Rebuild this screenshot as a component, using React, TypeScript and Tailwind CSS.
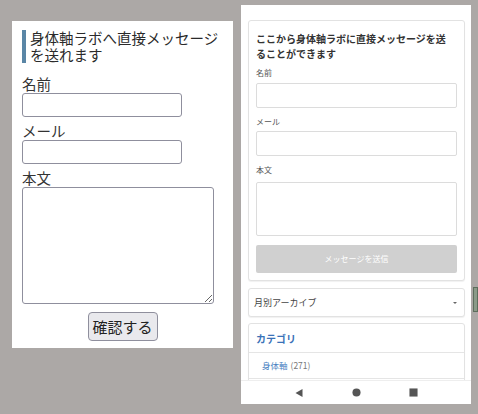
import React from "react";

const jp = { fontFamily: '"Noto Sans CJK JP", "Noto Sans", sans-serif' };

function OldForm() {
  return (
    <div className="mt-[21px] ml-[12px] w-[221px] h-[327px] bg-white pl-[10px] pr-[10px] pt-[9px] flex flex-col text-[#333]">
      <div className="border-l-[4px] border-[#5a86a6] pl-[4px] text-[14.5px] leading-[16.5px] h-[33px] text-[#2a2a2a]">
        身体軸ラボへ直接メッセージを送れます
      </div>
      <label className="mt-[12px] text-[14.5px] leading-[18px]">名前</label>
      <input className="w-[160px] h-[24px] border border-[#8f8f9d] rounded-[3px]" />
      <label className="mt-[5px] text-[14.5px] leading-[18px]">メール</label>
      <input className="w-[160px] h-[24px] border border-[#8f8f9d] rounded-[3px]" />
      <label className="mt-[5px] text-[14.5px] leading-[18px]">本文</label>
      <textarea className="w-[192px] h-[117px] border border-[#8f8f9d] rounded-[3px] resize" />
      <div className="flex justify-center mt-[8px]">
        <button className="w-[70px] h-[29px] bg-[#e9e9ed] border border-[#8f8f9d] rounded-[4px] text-[15px] leading-none text-[#222]">
          確認する
        </button>
      </div>
    </div>
  );
}

function Card({ children, className = "" }: { children: React.ReactNode; className?: string }) {
  return (
    <div className={"border border-[#e2e2e2] rounded-[3px] bg-white shadow-[0_1px_1px_rgba(0,0,0,0.06)] " + className}>
      {children}
    </div>
  );
}

function Phone() {
  return (
    <div className="mt-[5px] ml-[8px] w-[230px] h-[399px] bg-white flex flex-col">
      <div className="flex-1 overflow-hidden px-[7px] pt-[15px] pr-[6px]">
        <Card className="px-[7px] pt-[10px] pb-[7px]">
          <div className="text-[10px] font-bold leading-[15px] text-[#333] pr-[3px]">
            ここから身体軸ラボに直接メッセージを送ることができます
          </div>
          <div className="mt-[6px] text-[8px] leading-[12px] text-[#555]">名前</div>
          <div className="mt-[4px] h-[25px] border border-[#dcdcdc] rounded-[2px]" />
          <div className="mt-[8px] text-[8px] leading-[12px] text-[#555]">メール</div>
          <div className="mt-[3px] h-[25px] border border-[#dcdcdc] rounded-[2px]" />
          <div className="mt-[8px] text-[8px] leading-[12px] text-[#555]">本文</div>
          <div className="mt-[6px] h-[54px] border border-[#dcdcdc] rounded-[2px]" />
          <div className="mt-[9px] h-[28px] bg-[#d0d0d0] rounded-[2px] flex items-center justify-center text-[8px] text-white">
            メッセージを送信
          </div>
        </Card>
        <Card className="mt-[7px] h-[29px] pl-[5px] pr-[7px] flex items-center justify-between">
          <span className="text-[9px] text-[#444]">月別アーカイブ</span>
          <span className="w-0 h-0 border-l-[2px] border-r-[2px] border-t-[2px] border-l-transparent border-r-transparent border-t-[#666]" />
        </Card>
        <Card className="mt-[6px]">
          <div className="h-[29px] px-[7px] flex items-center text-[10px] font-bold text-[#3a72b8] border-b border-[#e5e5e5]">
            カテゴリ
          </div>
          <div className="h-[26px] pl-[13px] flex items-center text-[8.5px] border-b border-[#e5e5e5]">
            <span className="text-[#4a7fc1]">身体軸</span>
            <span className="ml-[3px] text-[#777]">(271)</span>
          </div>
          <div className="h-[26px]" />
        </Card>
      </div>
      <div className="h-[24px] border-t border-[#eeeeee] flex items-center justify-center gap-[48px] text-[#555]">
        <svg width="10" height="10" viewBox="0 0 10 10"><path d="M8.5 1 L1.5 5 L8.5 9 Z" fill="#555" /></svg>
        <svg width="9" height="9" viewBox="0 0 10 10"><circle cx="5" cy="5" r="4.5" fill="#555" /></svg>
        <svg width="9" height="9" viewBox="0 0 10 10"><rect x="0.5" y="0.5" width="9" height="9" fill="#555" /></svg>
      </div>
    </div>
  );
}

export default function App() {
  return (
    <div className="w-[478px] h-[414px] bg-[#aca8a6] flex items-start overflow-hidden" style={jp}>
      <OldForm />
      <Phone />
      <div className="mt-[287px] ml-[2px] w-[5px] h-[25px] bg-[#8a9a88] border border-[#5d6d5c]" />
    </div>
  );
}
